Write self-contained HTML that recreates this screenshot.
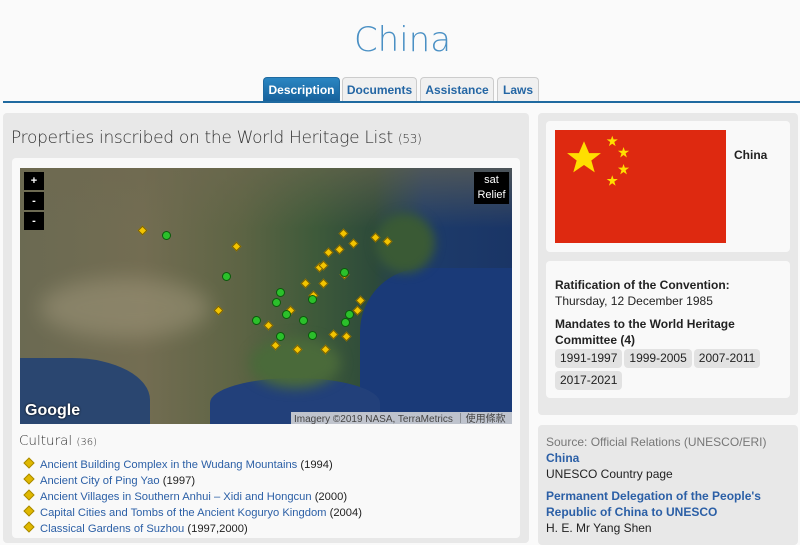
<!DOCTYPE html>
<html><head><meta charset="utf-8"><style>
*{margin:0;padding:0;box-sizing:border-box}
body{width:800px;height:531px;overflow:hidden;background:#fafafa;font-family:"Liberation Sans",Arial,sans-serif;position:relative;font-size:12px;color:#222}
.abs{position:absolute}
h1{position:absolute;top:20px;left:0;width:805px;text-align:center;font-size:34px;color:#4a90c4;font-family:"DejaVu Sans","Liberation Sans",sans-serif;font-weight:200}
.tab{position:absolute;top:77px;height:25px;border:1px solid #ccc;border-bottom:none;border-radius:4px 4px 0 0;background:#f0f0f0;color:#2466a4;font-weight:bold;font-size:12px;text-align:center;line-height:25px}
.line{position:absolute;top:101px;left:3px;width:797px;height:2px;background:#1f6aa0}
.panel{position:absolute;background:#e8e8e8;border-radius:4px}
.box{position:absolute;background:#f9f9f9;border-radius:4px}
a{color:#2b5fa6;text-decoration:none}
.li{position:absolute;left:23px;font-size:11.2px;white-space:nowrap}
.dia{display:inline-block;width:8px;height:8px;background:#e0b800;border:1px solid #a88a00;transform:rotate(45deg);margin:0 7px 0 2px;position:relative;top:-1px}
.tag{display:inline-block;background:#e2e2e2;border-radius:4px;padding:2px 5px;font-size:12px;margin:0 2px 3px 0}
.mk{position:absolute;width:7px;height:7px;background:#f3c400;border:1px solid #7a6000;transform:rotate(45deg)}
.gm{position:absolute;width:9px;height:9px;border-radius:50%;background:#2bc02b;border:1px solid #0a5a0a}
.btn{position:absolute;left:24px;width:20px;height:18px;background:#000;color:#fff;font-size:11px;text-align:center;line-height:18px;font-weight:bold}
</style></head><body>
<h1>China</h1>
<div class="tab" style="left:263px;width:77px;background:linear-gradient(#2a86c2,#16609a);color:#fff;border-color:#1f6aa0">Description</div>
<div class="tab" style="left:342px;width:75px">Documents</div>
<div class="tab" style="left:420px;width:74px">Assistance</div>
<div class="tab" style="left:497px;width:42px">Laws</div>
<div class="line"></div>

<div class="panel" style="left:3px;top:113px;width:526px;height:430px"></div>
<div class="abs" style="left:11px;top:128px;font-size:17px;color:#333;font-family:'DejaVu Sans',sans-serif;font-weight:300;letter-spacing:-0.3px">Properties inscribed on the World Heritage List <span style="font-size:12px">(53)</span></div>
<div class="box" style="left:12px;top:158px;width:508px;height:380px"></div>
<div class="abs" style="left:20px;top:168px;width:492px;height:256px;overflow:hidden;background:linear-gradient(90deg,#6b6a52 0%,#736d52 25%,#5d6444 45%,#3e5a3a 60%,#2d4a3a 72%,#1d3b6a 82%,#1a3566 100%)">
 <div class="abs" style="left:0;top:0;width:492px;height:60px;background:linear-gradient(180deg,rgba(110,105,80,.6),rgba(0,0,0,0))"></div>
 <div class="abs" style="left:20px;top:110px;width:170px;height:60px;border-radius:50%;background:#a39a7e;opacity:.5;filter:blur(10px)"></div>
 <div class="abs" style="left:340px;top:100px;width:160px;height:160px;background:#1a3a78;border-radius:40% 0 0 0"></div>
 <div class="abs" style="left:190px;top:210px;width:170px;height:50px;background:#22407a;border-radius:50% 50% 0 0"></div>
 <div class="abs" style="left:0;top:190px;width:130px;height:70px;background:#2a4670;border-radius:0 60% 0 0"></div>
 <div class="abs" style="left:230px;top:170px;width:90px;height:50px;background:#4a6a3a;border-radius:50%;filter:blur(6px)"></div>
 <div class="abs" style="left:355px;top:45px;width:60px;height:60px;background:#3a5a35;border-radius:50%;filter:blur(5px)"></div>
</div>
<div class="btn" style="top:172px">+</div>
<div class="btn" style="top:192px">-</div>
<div class="btn" style="top:212px">-</div>
<div class="abs" style="left:474px;top:172px;width:35px;height:32px;background:#000;color:#fff;font-size:11px;text-align:center;line-height:15px;padding-top:1px">sat<br>Relief</div>
<div class="abs" style="left:25px;top:402px;color:#fff;font-size:16px;font-weight:bold;text-shadow:0 0 2px #000">Google</div>
<div class="abs" style="left:291px;top:412px;width:221px;height:12px;background:rgba(220,220,220,.85);font-size:10px;color:#444;line-height:12px;padding-left:3px;white-space:nowrap">Imagery ©2019 NASA, TerraMetrics <span style="font-family:'Noto Sans CJK TC',sans-serif">│使用條款</span></div>
<div class="mk" style="left:139px;top:227px"></div><div class="mk" style="left:233px;top:243px"></div>
<div class="mk" style="left:340px;top:230px"></div><div class="mk" style="left:336px;top:246px"></div>
<div class="mk" style="left:350px;top:240px"></div><div class="mk" style="left:325px;top:249px"></div>
<div class="mk" style="left:372px;top:234px"></div><div class="mk" style="left:384px;top:238px"></div>
<div class="mk" style="left:316px;top:264px"></div><div class="mk" style="left:302px;top:280px"></div>
<div class="mk" style="left:320px;top:280px"></div><div class="mk" style="left:341px;top:271px"></div>
<div class="mk" style="left:215px;top:307px"></div><div class="mk" style="left:310px;top:292px"></div>
<div class="mk" style="left:287px;top:307px"></div><div class="mk" style="left:357px;top:297px"></div>
<div class="mk" style="left:354px;top:307px"></div><div class="mk" style="left:265px;top:322px"></div>
<div class="mk" style="left:294px;top:346px"></div><div class="mk" style="left:272px;top:342px"></div>
<div class="mk" style="left:330px;top:331px"></div><div class="mk" style="left:322px;top:346px"></div>
<div class="mk" style="left:343px;top:333px"></div><div class="mk" style="left:320px;top:262px"></div>
<div class="gm" style="left:162px;top:231px"></div><div class="gm" style="left:222px;top:272px"></div>
<div class="gm" style="left:276px;top:288px"></div><div class="gm" style="left:272px;top:298px"></div>
<div class="gm" style="left:308px;top:295px"></div><div class="gm" style="left:282px;top:310px"></div>
<div class="gm" style="left:299px;top:316px"></div><div class="gm" style="left:252px;top:316px"></div>
<div class="gm" style="left:345px;top:310px"></div><div class="gm" style="left:341px;top:318px"></div>
<div class="gm" style="left:308px;top:331px"></div><div class="gm" style="left:340px;top:268px"></div>
<div class="gm" style="left:276px;top:332px"></div>

<div class="abs" style="left:19px;top:433px;font-size:13.5px;color:#333;font-family:'DejaVu Sans',sans-serif;font-weight:300">Cultural <span style="font-size:10px">(36)</span></div>
<div class="li" style="top:459px"><span class="dia"></span><a>Ancient Building Complex in the Wudang Mountains</a> (1994)</div>
<div class="li" style="top:475px"><span class="dia"></span><a>Ancient City of Ping Yao</a> (1997)</div>
<div class="li" style="top:491px"><span class="dia"></span><a>Ancient Villages in Southern Anhui – Xidi and Hongcun</a> (2000)</div>
<div class="li" style="top:507px"><span class="dia"></span><a>Capital Cities and Tombs of the Ancient Koguryo Kingdom</a> (2004)</div>
<div class="li" style="top:523px"><span class="dia"></span><a>Classical Gardens of Suzhou</a> (1997,2000)</div>

<div class="panel" style="left:538px;top:113px;width:260px;height:302px"></div>
<div class="box" style="left:546px;top:121px;width:244px;height:131px"></div>
<div class="abs" style="left:555px;top:130px;width:171px;height:113px;background:#de2910">
<svg width="171" height="113" viewBox="0 0 30 20"><g fill="#ffde00">
<polygon points="5,2 5.9,4.1 8,4.1 6.3,5.4 6.9,7.5 5,6.2 3.1,7.5 3.7,5.4 2,4.1 4.1,4.1"/>
<g transform="translate(10,2) scale(.33)"><polygon points="0,-3 .7,-1 3,-1 1.1,.4 1.8,2.6 0,1.3 -1.8,2.6 -1.1,.4 -3,-1 -.7,-1"/></g>
<g transform="translate(12,4) scale(.33)"><polygon points="0,-3 .7,-1 3,-1 1.1,.4 1.8,2.6 0,1.3 -1.8,2.6 -1.1,.4 -3,-1 -.7,-1"/></g>
<g transform="translate(12,7) scale(.33)"><polygon points="0,-3 .7,-1 3,-1 1.1,.4 1.8,2.6 0,1.3 -1.8,2.6 -1.1,.4 -3,-1 -.7,-1"/></g>
<g transform="translate(10,9) scale(.33)"><polygon points="0,-3 .7,-1 3,-1 1.1,.4 1.8,2.6 0,1.3 -1.8,2.6 -1.1,.4 -3,-1 -.7,-1"/></g>
</g></svg></div>
<div class="abs" style="left:734px;top:148px;font-weight:bold">China</div>
<div class="box" style="left:546px;top:261px;width:244px;height:137px"></div>
<div class="abs" style="left:555px;top:277px;width:230px;line-height:16px">
<b>Ratification of the Convention:</b><br>Thursday, 12 December 1985
<div style="margin-top:7px;font-weight:bold">Mandates to the World Heritage Committee (4)</div>
<div style="margin-top:1px;line-height:15px"><span class="tag">1991-1997</span><span class="tag">1999-2005</span><span class="tag">2007-2011</span><span class="tag">2017-2021</span></div>
</div>

<div class="panel" style="left:538px;top:425px;width:260px;height:120px"></div>
<div class="abs" style="left:546px;top:434px;width:240px;line-height:16px">
<div style="color:#777">Source: Official Relations (UNESCO/ERI)</div>
<a style="font-weight:bold">China</a><br>UNESCO Country page
<div style="margin-top:6px"><a style="font-weight:bold">Permanent Delegation of the People's Republic of China to UNESCO</a><br>H. E. Mr Yang Shen</div>
</div>
</body></html>
